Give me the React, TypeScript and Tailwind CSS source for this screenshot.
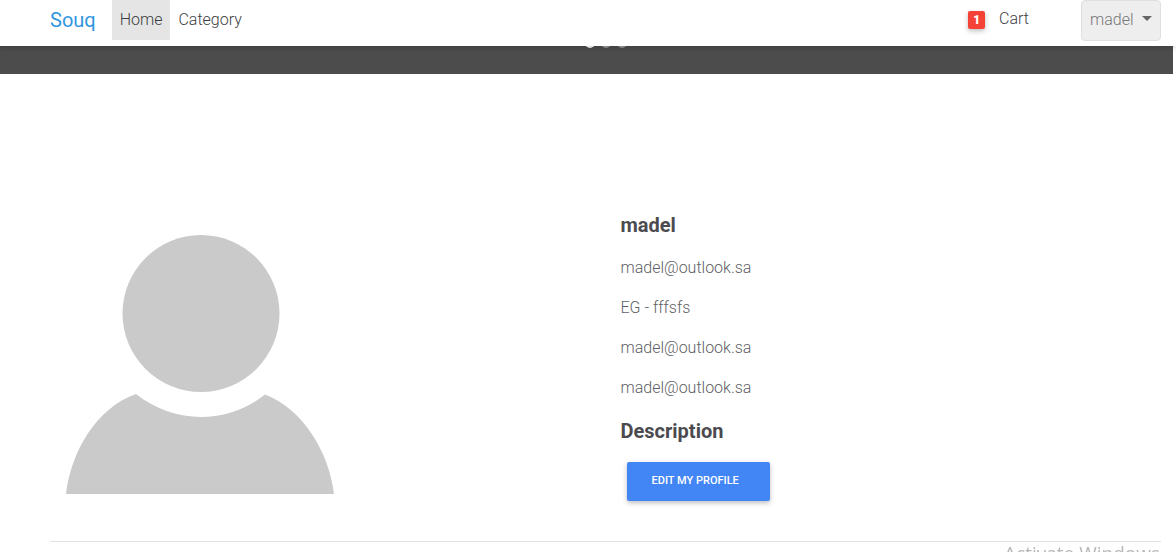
const contactLines = [
  'madel@outlook.sa',
  'EG - fffsfs',
  'madel@outlook.sa',
  'madel@outlook.sa',
];

function Navbar() {
  return (
    <header className="relative z-10 flex h-[46px] items-start bg-white pr-[15px] pl-[50px] shadow-[0_2px_5px_rgba(0,0,0,0.16)]">
      <a href="#" className="mr-4 pt-1 text-xl leading-8 text-[#2f96e0]">
        Souq
      </a>
      <nav className="flex h-10 font-light text-[#3c3e3f]">
        <a href="#" aria-current="page" className="bg-[#e5e5e5] px-2 leading-10">
          Home
        </a>
        <a href="#" className="px-2 leading-10">
          Category
        </a>
      </nav>
      <div className="ml-auto flex h-10 items-start text-[#3c3e3f]">
        <a href="#" className="mr-13 flex items-center font-light">
          <span className="mr-3.5 mt-0.5 rounded-xs bg-[#f44336] px-[5px] text-xs leading-[18px] font-black text-white shadow-[0_2px_5px_rgba(0,0,0,0.26)]">
            1
          </span>
          <span className="leading-[38px]">Cart</span>
        </a>
        <button
          type="button"
          className="flex h-[41px] w-20 items-start justify-between rounded-sm border border-[#e0e0e0] bg-[#eeeeee] px-2 font-light text-[#777777]"
        >
          <span className="leading-[38px]">madel</span>
          <svg viewBox="0 0 10 5" className="mt-[15px] h-[5px] w-2.5" fill="#666666" aria-hidden="true">
            <path d="M0 0h10L5 5z" />
          </svg>
        </button>
      </div>
    </header>
  );
}

function CarouselFooter() {
  return (
    <div className="mr-[3px] h-7 overflow-hidden bg-[#4c4c4c]">
      <div className="-mt-2 flex justify-center gap-1.5 pl-[38px]">
        <span className="size-2.5 rounded-full bg-white" />
        <span className="size-2.5 rounded-full bg-[#999999]" />
        <span className="size-2.5 rounded-full bg-[#999999]" />
      </div>
    </div>
  );
}

function Avatar() {
  return (
    <svg viewBox="0 0 268 260" className="ml-4 h-[260px] w-[268px]" fill="#cacaca" role="img" aria-label="Profile">
      <circle cx="135" cy="79.500" r="78.500" />
      <path d="M0 260C5 218 30 174 70 160C109 190.500 161 190.500 199 160.500C237 175 263 218 268 260Z" />
    </svg>
  );
}

export default function App() {
  return (
    <div className="min-h-screen overflow-hidden bg-white font-['Roboto',sans-serif] text-base">
      <Navbar />
      <CarouselFooter />
      <main className="pt-[136px] pr-[15px] pl-[50px]">
        <section className="grid grid-cols-2 gap-[30px]">
          <div className="pt-6">
            <Avatar />
          </div>
          <div className="text-[#4b4b4f]">
            <h1 className="mb-4 text-xl leading-[30px] font-bold">madel</h1>
            {contactLines.map((line, index) => (
              <p key={index} className="mb-4 leading-6 font-light text-[#5f5f66]">
                {line}
              </p>
            ))}
            <h2 className="mb-4 text-xl leading-[30px] font-bold">Description</h2>
            <button
              type="button"
              className="ml-1.5 block h-[39px] w-[143px] rounded-xs bg-[#4285f4] pl-[25px] text-left text-[11px] font-medium text-white uppercase shadow-[0_2px_5px_rgba(0,0,0,0.26)]"
            >
              Edit my profile
            </button>
          </div>
        </section>
        <hr className="mt-10 border-[#e2e2e2]" />
      </main>
      <div className="pointer-events-none fixed right-4 -bottom-[15px] font-['Open_Sans',sans-serif] text-[19px] leading-7 text-[#b8b8b8]">
        Activate Windows
      </div>
    </div>
  );
}
